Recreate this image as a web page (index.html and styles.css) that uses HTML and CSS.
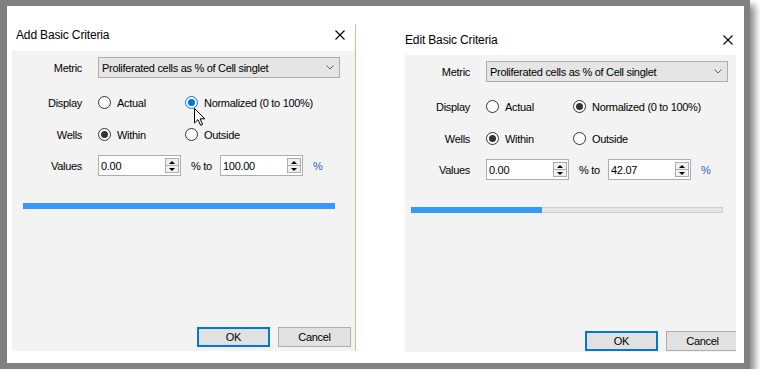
FILE: index.html
```html
<!DOCTYPE html>
<html>
<head>
<meta charset="utf-8">
<link rel="stylesheet" href="styles.css">
</head>
<body>
<div class="screen">
  <div class="frame">
    <section class="dialog dialog-add">
      <header class="titlebar">
        <span class="title">Add Basic Criteria</span>
        <svg class="close" viewBox="0 0 10 10"><path d="M0.5 0.5 L9.5 9.5 M9.5 0.5 L0.5 9.5" stroke="#000" stroke-width="1.1" fill="none"/></svg>
      </header>
      <div class="panel">
        <div class="form">
          <div class="row">
            <span class="label">Metric</span>
            <div class="select"><span>Proliferated cells as % of Cell singlet</span><svg class="chevron" viewBox="0 0 8 5"><path d="M0.5 0.5 L4 4 L7.5 0.5" stroke="#606060" fill="none"/></svg></div>
          </div>
          <div class="row row-display">
            <span class="label">Display</span>
            <div class="options">
              <div class="option"><span class="radio"></span><span>Actual</span></div>
              <div class="option"><span class="radio checked focus"></span><span>Normalized (0 to 100%)</span>
                <svg class="cursor" viewBox="0 0 12 18"><path d="M0.5 0.5 L0.5 15 L4 11.6 L6.6 17.3 L8.6 16.4 L6.1 10.8 L10.8 10.8 Z" fill="#fff" stroke="#000" stroke-width="1" stroke-linejoin="miter"/></svg>
              </div>
            </div>
          </div>
          <div class="row row-wells">
            <span class="label">Wells</span>
            <div class="options">
              <div class="option"><span class="radio checked"></span><span>Within</span></div>
              <div class="option"><span class="radio"></span><span>Outside</span></div>
            </div>
          </div>
          <div class="row row-values">
            <span class="label">Values</span>
            <div class="values">
              <div class="spinbox"><span>0.00</span><span class="spin"><span class="spin-up"></span><span class="spin-down"></span></span></div>
              <span class="to">% to</span>
              <div class="spinbox"><span>100.00</span><span class="spin"><span class="spin-up"></span><span class="spin-down"></span></span></div>
              <span class="unit">%</span>
            </div>
          </div>
          <div class="progress"><div class="bar" style="width:100%"></div></div>
          <div class="buttons">
            <button class="btn btn-ok">OK</button>
            <button class="btn">Cancel</button>
          </div>
        </div>
      </div>
    </section>
    <div class="divider"></div>
    <section class="dialog dialog-edit">
      <header class="titlebar">
        <span class="title">Edit Basic Criteria</span>
        <svg class="close" viewBox="0 0 10 10"><path d="M0.5 0.5 L9.5 9.5 M9.5 0.5 L0.5 9.5" stroke="#000" stroke-width="1.1" fill="none"/></svg>
      </header>
      <div class="panel">
        <div class="form">
          <div class="row">
            <span class="label">Metric</span>
            <div class="select"><span>Proliferated cells as % of Cell singlet</span><svg class="chevron" viewBox="0 0 8 5"><path d="M0.5 0.5 L4 4 L7.5 0.5" stroke="#606060" fill="none"/></svg></div>
          </div>
          <div class="row row-display">
            <span class="label">Display</span>
            <div class="options">
              <div class="option"><span class="radio"></span><span>Actual</span></div>
              <div class="option"><span class="radio checked"></span><span>Normalized (0 to 100%)</span></div>
            </div>
          </div>
          <div class="row row-wells">
            <span class="label">Wells</span>
            <div class="options">
              <div class="option"><span class="radio checked"></span><span>Within</span></div>
              <div class="option"><span class="radio"></span><span>Outside</span></div>
            </div>
          </div>
          <div class="row row-values">
            <span class="label">Values</span>
            <div class="values">
              <div class="spinbox"><span>0.00</span><span class="spin"><span class="spin-up"></span><span class="spin-down"></span></span></div>
              <span class="to">% to</span>
              <div class="spinbox"><span>42.07</span><span class="spin"><span class="spin-up"></span><span class="spin-down"></span></span></div>
              <span class="unit">%</span>
            </div>
          </div>
          <div class="progress"><div class="bar" style="width:42.07%"></div></div>
          <div class="buttons">
            <button class="btn btn-ok">OK</button>
            <button class="btn">Cancel</button>
          </div>
        </div>
      </div>
    </section>
  </div>
</div>
</body>
</html>
```

FILE: styles.css
```css
* { box-sizing: border-box; }
html, body { margin: 0; padding: 0; background: #fff; }
body {
  font-family: "Liberation Sans", Arial, sans-serif;
  font-size: 11px;
  letter-spacing: -0.3px;
  color: #000;
}
.screen {
  width: 750px;
  height: 369px;
  background: #808080;
  padding: 6px 6px 6px 7px;
  box-shadow: 5px 5px 7px rgba(0, 0, 0, 0.45);
}
.frame {
  display: flex;
  width: 737px;
  height: 357px;
  background: #fff;
}
.dialog { display: flex; flex-direction: column; }
.dialog-add { width: 348px; }
.dialog-edit { width: 388px; }
.titlebar {
  display: flex;
  align-items: center;
  justify-content: space-between;
}
.dialog-add .titlebar { height: 45px; padding: 13px 10px 0 9px; }
.dialog-edit .titlebar { height: 49px; padding: 19px 11px 0 49px; }
.title { font-size: 12px; letter-spacing: -0.15px; line-height: 16px; }
.close { width: 10px; height: 10px; display: block; }
.panel { background: #f3f3f3; overflow: hidden; }
.dialog-add .panel { margin-left: 5px; width: 343px; height: 300px; }
.dialog-edit .panel { margin-left: 49px; width: 331px; height: 297px; }
.form { width: 343px; padding-top: 6px; }
.dialog-edit .form { margin-left: -5px; }
.divider {
  width: 1px;
  height: 327px;
  margin-top: 18px;
  background: #b2cd8c;
}
.row {
  display: grid;
  grid-template-columns: 70px auto;
  column-gap: 16px;
  align-items: center;
  height: 21px;
}
.row-display { margin-top: 14px; }
.row-wells { margin-top: 11px; }
.row-values { margin-top: 10px; }
.label { text-align: right; white-space: nowrap; }
.select {
  width: 242px;
  height: 21px;
  border: 1px solid #acacac;
  background: #e5e5e5;
  display: flex;
  align-items: center;
  justify-content: space-between;
  padding: 0 5px 0 3px;
}
.chevron { width: 8px; height: 5px; display: block; }
.options { display: flex; }
.option {
  display: flex;
  align-items: center;
  gap: 6px;
  position: relative;
  white-space: nowrap;
}
.option:first-child { width: 87px; }
.radio {
  width: 13px;
  height: 13px;
  border: 1px solid #333;
  border-radius: 50%;
  background: #fff;
  display: flex;
  align-items: center;
  justify-content: center;
  flex: none;
}
.radio.checked::after {
  content: "";
  width: 7px;
  height: 7px;
  border-radius: 50%;
  background: #333;
}
.radio.focus { border-color: #0078d7; }
.radio.focus::after { background: #0078d7; }
.cursor {
  position: absolute;
  left: 9px;
  top: 12px;
  width: 12px;
  height: 18px;
}
.values { display: flex; align-items: center; }
.spinbox {
  width: 83px;
  height: 21px;
  border: 1px solid #adadad;
  background: #fff;
  display: flex;
  align-items: center;
  justify-content: space-between;
  padding: 0 1px 0 2px;
}
.spin {
  width: 14px;
  height: 15px;
  border: 1px solid #adadad;
  background: #f0f0f0;
  display: flex;
  flex-direction: column;
}
.spin-up, .spin-down {
  flex: 1;
  display: flex;
  align-items: center;
  justify-content: center;
}
.spin-up { border-bottom: 1px solid #adadad; }
.spin-up::after {
  content: "";
  border-left: 3px solid transparent;
  border-right: 3px solid transparent;
  border-bottom: 3px solid #000;
}
.spin-down::after {
  content: "";
  border-left: 3px solid transparent;
  border-right: 3px solid transparent;
  border-top: 3px solid #000;
}
.to { width: 39px; padding-left: 10px; white-space: nowrap; }
.unit { margin-left: 10px; color: #1f5fbf; }
.progress {
  margin: 27px 0 0 11px;
  width: 312px;
  height: 6px;
  background: #e6e6e6;
  box-shadow: inset 0 0 0 1px #d0d0d0;
}
.bar { height: 100%; background: #3399ff; }
.buttons {
  display: flex;
  gap: 8px;
  margin: 118px 0 0 185px;
}
.btn {
  width: 73px;
  height: 20px;
  border: 1px solid #adadad;
  background: #e1e1e1;
  font: inherit;
  letter-spacing: inherit;
  color: #000;
  padding: 0;
  flex: none;
}
.btn-ok { border: 2px solid #0078d7; }
```
